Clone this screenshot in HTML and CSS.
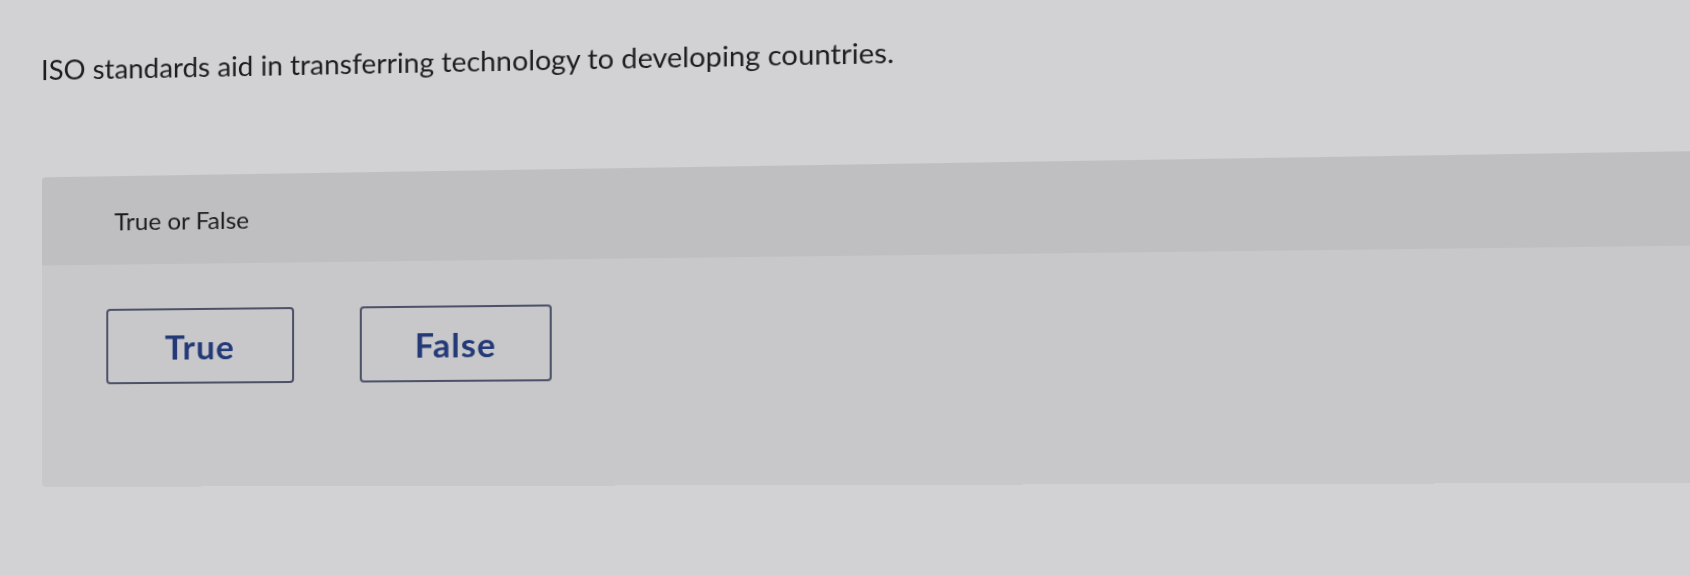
FILE: index.html
```html
<!DOCTYPE html>
<html lang="en">
<head>
    <meta charset="UTF-8">
    <meta name="viewport" content="width=device-width, initial-scale=1.0">
    <title>Question</title>
    <link rel="stylesheet" href="styles.css">
</head>
<body>
    <div class="page">
        <p class="prompt">ISO standards aid in transferring technology to developing countries.</p>

        <div class="question">
            <div class="question-head">True or False</div>
            <div class="choices">
                <button class="choice">True</button>
                <button class="choice">False</button>
            </div>
        </div>
    </div>
</body>
</html>
```

FILE: styles.css
```css
html, body { margin: 0; height: 100%; overflow: hidden; }
body { font-family: Lato, "Open Sans", Arial, sans-serif; background-color: #d2d2d4; color: #1d1d20; }

/* screen seen slightly from the left; the far edge lands on the window edge */
.page { width: 1578px; box-sizing: border-box; padding: 0 0 0 41px; transform-origin: 0 543px; transform: perspective(1500px) rotateY(-3.73deg); }

.prompt { margin: 0; padding-top: 53px; font-size: 27.4px; line-height: 36px; }

.question { margin: 89px 0 0 1px; background-color: #c8c8ca; border-radius: 4px 0 0 4px; }
.question-head { height: 88px; display: flex; align-items: center; padding-left: 72px; font-size: 24px; background-color: #bfbfc1; border-radius: 4px 0 0 0; }

.choices { display: flex; gap: 64px; padding: 44px 0 102px 64px; }
.choice { width: 185px; height: 75px; background: transparent; border: 2px solid #4d5269; border-radius: 4px; font-family: inherit; font-size: 33px; font-weight: 700; letter-spacing: 1px; color: #243a78; cursor: pointer; }
.choice:hover { background-color: #d2d2d6; }
```
